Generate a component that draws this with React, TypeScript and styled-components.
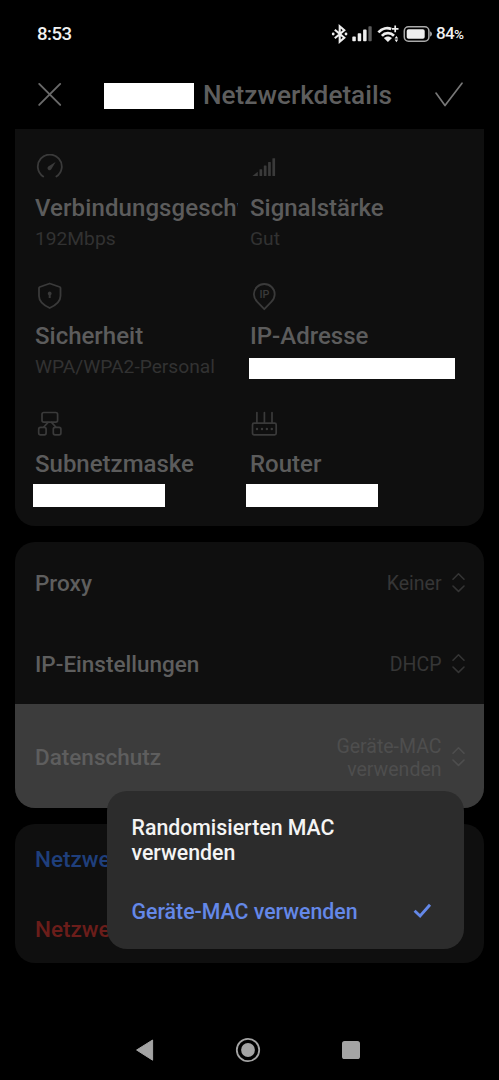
import React from "react";
import styled, { createGlobalStyle } from "styled-components";

const GlobalStyle = createGlobalStyle`
  *, *::before, *::after { box-sizing: border-box; }
  html, body { margin: 0; background: #000; }
  body { font-family: Roboto, "Liberation Sans", sans-serif; }
  svg { display: block; flex: none; }
`;

const Screen = styled.div`
  width: 499px;
  height: 1080px;
  background: #000;
  display: flex;
  flex-direction: column;
  overflow: hidden;
`;

const StatusBar = styled.div`
  height: 60px;
  padding: 7px 36px 0 37px;
  display: flex;
  align-items: center;
  justify-content: space-between;
  color: #f2f2f2;
`;

const Clock = styled.span`
  font-size: 18.6px;
  font-weight: 500;
  line-height: 24px;
  letter-spacing: -0.5px;
`;

const StatusIcons = styled.div`
  display: flex;
  align-items: center;
`;

const BatteryText = styled.span`
  margin-left: 4px;
  width: 27px;
  font-size: 17px;
  font-weight: 500;
  line-height: 20px;
  letter-spacing: -0.7px;
  white-space: nowrap;
`;

const Percent = styled.small`
  font-size: 13.5px;
  font-weight: 500;
`;

const Header = styled.header`
  height: 69px;
  padding: 0 35px 0 37px;
  display: flex;
  align-items: center;
`;

const HeaderTitle = styled.h1`
  margin: 1px auto 0 9px;
  font-size: 26.2px;
  font-weight: 500;
  line-height: 32px;
  color: #5e5e5e;
  white-space: nowrap;
`;

const Redacted = styled.div<{ $w: number; $h: number; $m?: string }>`
  flex: none;
  width: ${(p) => p.$w}px;
  height: ${(p) => p.$h}px;
  margin: ${(p) => p.$m ?? "0"};
  background: #fff;
`;

const Content = styled.main`
  flex: 1;
  padding: 0 15px;
  display: flex;
  flex-direction: column;
  gap: 16px;
`;

const DetailsCard = styled.section`
  height: 397px;
  padding: 25px 0 0 20px;
  border-radius: 0 0 20px 20px;
  background: #0f0f0f;
  display: grid;
  grid-template-columns: 203px 203px;
  grid-auto-rows: 98px;
  column-gap: 12px;
  row-gap: 30px;
`;

const Detail = styled.div`
  display: flex;
  flex-direction: column;
  align-items: flex-start;
  color: #3a3a3a;
`;

const DetailTitle = styled.div<{ $tracking?: number }>`
  width: 203px;
  margin-top: 13px;
  font-size: 24px;
  font-weight: 500;
  line-height: 30px;
  letter-spacing: ${(p) => p.$tracking ?? 0}px;
  color: #5c5c5c;
  white-space: nowrap;
  overflow: hidden;
`;

const DetailValue = styled.div`
  margin-top: 3px;
  font-size: 19.2px;
  line-height: 25px;
  color: #323232;
  white-space: nowrap;
`;

const Card = styled.section`
  border-radius: 20px;
  background: #0f0f0f;
`;

const SettingRow = styled.div<{ $active?: boolean }>`
  position: relative;
  height: ${(p) => (p.$active ? 104 : 81)}px;
  padding: 1px 18.5px 0 20px;
  display: flex;
  align-items: center;
  border-radius: ${(p) => (p.$active ? "0 0 20px 20px" : "0")};
  background: ${(p) => (p.$active ? "#3c3c3c" : "transparent")};
`;

const SettingLabel = styled.span`
  flex: 1;
  font-size: 22.5px;
  font-weight: 500;
  line-height: 30px;
  color: #5e5e5e;
`;

const SettingValue = styled.span<{ $active?: boolean }>`
  margin: ${(p) => (p.$active ? "2px" : "0")} 9px 0 0;
  font-size: 19.5px;
  line-height: 23px;
  text-align: right;
  color: ${(p) => (p.$active ? "#4e4e4e" : "#363636")};
`;

const ActionRow = styled.div<{ $color: string }>`
  height: 69.5px;
  padding: 1px 20px 0;
  display: flex;
  align-items: center;
  font-size: 22.5px;
  font-weight: 500;
  color: ${(p) => p.$color};
`;

const Menu = styled.div`
  position: absolute;
  z-index: 1;
  top: 87px;
  right: 20px;
  width: 357px;
  height: 158px;
  padding: 24px 32px 0 24.5px;
  border-radius: 20px;
  background: #2c2c2c;
`;

const MenuItem = styled.div<{ $selected?: boolean }>`
  margin-bottom: 34px;
  display: flex;
  align-items: center;
  justify-content: space-between;
  font-size: 21.3px;
  font-weight: 500;
  line-height: 25px;
  color: ${(p) => (p.$selected ? "#6488e8" : "#f4f4f4")};
`;

const NavBar = styled.nav`
  height: 60px;
  padding: 0 138px 0 135px;
  display: flex;
  align-items: center;
  justify-content: space-between;
`;

const line = { fill: "none", stroke: "currentColor", strokeLinecap: "round", strokeLinejoin: "round" } as const;

const StatusGlyphs = () => (
  <svg width="101" height="22" viewBox="331 22 101 22">
    <path d="M334.8 28.7 L344.3 36.8 L339.7 40.8 V25.2 L344.3 29.2 L334.8 37.3" fill="none" stroke="#eee" strokeWidth="2.1" />
    <circle cx="333.2" cy="33" r="1.4" fill="#eee" />
    <circle cx="346" cy="33" r="1.4" fill="#eee" />
    <g fill="#eee">
      <rect x="352.3" y="35.6" width="3.5" height="4.7" rx="0.8" />
      <rect x="357.7" y="32.3" width="3.5" height="8" rx="0.8" />
      <rect x="363.1" y="28.6" width="3.5" height="11.7" rx="0.8" />
    </g>
    <rect x="368.4" y="25.2" width="3.3" height="15.1" rx="0.8" fill="#5c5c5c" />
    <g fill="none" stroke="#eee" strokeWidth="2.7">
      <path d="M378.4 31.3 C382 27.3 387.2 26.3 391.2 28" />
      <path d="M381.9 34.9 C385 31.4 390.5 31.2 394 34.7" />
    </g>
    <path d="M383.8 37 C386.2 34.9 389.6 34.9 392 37 L387.9 41 Z" fill="#eee" />
    <path d="M395.2 24.6 V31.2 M391.9 27.9 H398.5" stroke="#eee" strokeWidth="1.7" />
    <path d="M394.6 37.6 L396.4 35 L398.2 37.6 Z M394.6 38.6 L396.4 41.2 L398.2 38.6 Z" fill="#eee" />
    <rect x="404.3" y="25.8" width="24.6" height="14.4" rx="4.2" fill="none" stroke="#aaa" strokeWidth="1.5" />
    <rect x="406.7" y="28.2" width="18" height="9.6" rx="1.8" fill="#eee" />
    <path d="M430.2 30.5 C432.4 31 432.4 35 430.2 35.5 Z" fill="#bbb" />
  </svg>
);

const CloseIcon = () => (
  <svg width="26" height="26" viewBox="0 0 26 26" color="#6a6a6a">
    <path d="M2.2 1.9 L23.2 22.9 M23.2 1.9 L2.2 22.9" {...line} strokeWidth="1.9" />
  </svg>
);

const ConfirmIcon = () => (
  <svg width="30" height="28" viewBox="0 0 30 28" color="#777">
    <path d="M2 12.1 L11 24.6 L28 2.2" {...line} strokeWidth="1.7" />
  </svg>
);

const SpeedIcon = () => (
  <svg width="28" height="26" viewBox="0 0 28 26">
    <path d="M8.2 22.6 A12 12 0 1 1 21.4 22.6" {...line} strokeWidth="1.8" />
    <path d="M20.6 7.9 L16.6 14.8 A2.1 2.1 0 1 1 13.6 12.3 Z" fill="currentColor" />
  </svg>
);

const SignalIcon = () => (
  <svg width="28" height="26" viewBox="0 0 28 26" fill="currentColor">
    <path d="M2.4 22 L7.8 17.8 V22 Z" />
    <rect x="9.5" y="15.2" width="2.7" height="6.8" rx="0.5" />
    <rect x="13.8" y="11.6" width="2.7" height="10.4" rx="0.5" />
    <rect x="18.1" y="8" width="2.7" height="14" rx="0.5" />
    <rect x="22.4" y="4.2" width="2.7" height="17.8" rx="0.5" />
  </svg>
);

const ShieldIcon = () => (
  <svg width="28" height="28" viewBox="0 0 28 28">
    <path d="M14.7 1.5 L24.8 5 Q25.5 5.3 25.5 6 V14 C25.5 19.6 20 23.6 14.7 26 C9.4 23.6 4 19.6 4 14 V6 Q4 5.3 4.7 5 Z" {...line} strokeWidth="1.8" />
    <path d="M14.7 9.6 a2 2 0 0 1 1 3.7 V16 h-2 V13.3 a2 2 0 0 1 1 -3.7 Z" fill="currentColor" />
  </svg>
);

const IpLabel = styled.text`
  font-family: Roboto, sans-serif;
  font-size: 10.8px;
  font-weight: 500;
  fill: currentColor;
`;

const IpIcon = () => (
  <svg width="28" height="30" viewBox="0 0 28 30">
    <path d="M14.3 27.2 L7.3 19.9 C4.8 17.3 3.9 14.8 3.9 12.2 A10.4 10.2 0 0 1 24.7 12.2 C24.7 14.8 23.8 17.3 21.3 19.9 Z" {...line} strokeWidth="1.8" />
    <IpLabel x="9.4" y="16">IP</IpLabel>
  </svg>
);

const SubnetIcon = () => (
  <svg width="28" height="28" viewBox="0 0 28 28">
    <g {...line} strokeWidth="1.7">
      <rect x="7" y="2.5" width="15.6" height="9.6" rx="1.8" />
      <rect x="3.7" y="17.4" width="7.4" height="7.5" rx="1.8" />
      <rect x="18.3" y="17.4" width="7.6" height="7.5" rx="1.8" />
      <path d="M13 12.4 L8.8 17 M16.6 12.4 L20.8 17" />
    </g>
  </svg>
);

const RouterIcon = () => (
  <svg width="28" height="28" viewBox="0 0 28 28">
    <g {...line} strokeWidth="1.7">
      <rect x="2.5" y="13.2" width="23.7" height="11.6" rx="1.6" />
      <path d="M6.9 13 V2.6 M14.4 13 V2.6 M22 13 V2.6" />
    </g>
    <g fill="currentColor">
      <circle cx="7" cy="19" r="1.2" />
      <circle cx="12" cy="19" r="1.2" />
      <circle cx="16.9" cy="19" r="1.2" />
      <circle cx="21.8" cy="19" r="1.2" />
    </g>
  </svg>
);

const IconBox = styled.div`
  height: 26px;
  flex: none;
`;

const SelectIcon = ({ color = "#343434" }: { color?: string }) => (
  <svg width="15" height="22" viewBox="0 0 15 22" color={color}>
    <path d="M2 7.2 L7.5 1.8 L13 7.2 M2 14 L7.5 19.4 L13 14" {...line} strokeWidth="1.6" />
  </svg>
);

const SelectedIcon = () => (
  <svg width="20" height="18" viewBox="0 0 20 18">
    <path d="M2.6 7.8 L8.1 13 L18 1.8" fill="none" stroke="#6488e8" strokeWidth="2.9" />
  </svg>
);

export default function App() {
  return (
    <Screen>
      <GlobalStyle />
      <StatusBar>
        <Clock>8:53</Clock>
        <StatusIcons>
          <StatusGlyphs />
          <BatteryText>84<Percent>%</Percent></BatteryText>
        </StatusIcons>
      </StatusBar>
      <Header>
        <CloseIcon />
        <Redacted $w={90} $h={26} $m="3px 0 0 41px" />
        <HeaderTitle>Netzwerkdetails</HeaderTitle>
        <ConfirmIcon />
      </Header>
      <Content>
        <DetailsCard>
          <Detail>
            <IconBox><SpeedIcon /></IconBox>
            <DetailTitle $tracking={0.1}>Verbindungsgeschwindigkeit</DetailTitle>
            <DetailValue>192Mbps</DetailValue>
          </Detail>
          <Detail>
            <IconBox><SignalIcon /></IconBox>
            <DetailTitle>Signalstärke</DetailTitle>
            <DetailValue>Gut</DetailValue>
          </Detail>
          <Detail>
            <IconBox><ShieldIcon /></IconBox>
            <DetailTitle>Sicherheit</DetailTitle>
            <DetailValue>WPA/WPA2-Personal</DetailValue>
          </Detail>
          <Detail>
            <IconBox><IpIcon /></IconBox>
            <DetailTitle>IP-Adresse</DetailTitle>
            <Redacted $w={206} $h={21} $m="7px 0 0 -1px" />
          </Detail>
          <Detail>
            <IconBox><SubnetIcon /></IconBox>
            <DetailTitle>Subnetzmaske</DetailTitle>
            <Redacted $w={132} $h={23} $m="5px 0 0 -2px" />
          </Detail>
          <Detail>
            <IconBox><RouterIcon /></IconBox>
            <DetailTitle>Router</DetailTitle>
            <Redacted $w={132} $h={23} $m="5px 0 0 -4px" />
          </Detail>
        </DetailsCard>
        <Card>
          <SettingRow>
            <SettingLabel>Proxy</SettingLabel>
            <SettingValue>Keiner</SettingValue>
            <SelectIcon />
          </SettingRow>
          <SettingRow>
            <SettingLabel>IP-Einstellungen</SettingLabel>
            <SettingValue>DHCP</SettingValue>
            <SelectIcon />
          </SettingRow>
          <SettingRow $active>
            <SettingLabel>Datenschutz</SettingLabel>
            <SettingValue $active>Geräte-MAC<br />verwenden</SettingValue>
            <SelectIcon color="#4e4e4e" />
            <Menu>
              <MenuItem>Randomisierten MAC<br />verwenden</MenuItem>
              <MenuItem $selected>Geräte-MAC verwenden<SelectedIcon /></MenuItem>
            </Menu>
          </SettingRow>
        </Card>
        <Card>
          <ActionRow $color="#1f3f7c">Netzwerk ändern</ActionRow>
          <ActionRow $color="#6b1d1a">Netzwerk entfernen</ActionRow>
        </Card>
      </Content>
      <NavBar>
        <svg width="20" height="24" viewBox="0 0 20 24"><path d="M1.6 12 L17.6 2 V22.2 Z" fill="#a4a4a4" stroke="#a4a4a4" strokeLinejoin="round" /></svg>
        <svg width="26" height="26" viewBox="0 0 26 26"><circle cx="13" cy="13" r="11.2" fill="none" stroke="#a4a4a4" strokeWidth="1.8" /><circle cx="13" cy="13" r="6.9" fill="#a4a4a4" /></svg>
        <svg width="20" height="20" viewBox="0 0 20 20"><rect x="1" y="1" width="18" height="18" rx="2.6" fill="#a4a4a4" /></svg>
      </NavBar>
    </Screen>
  );
}
